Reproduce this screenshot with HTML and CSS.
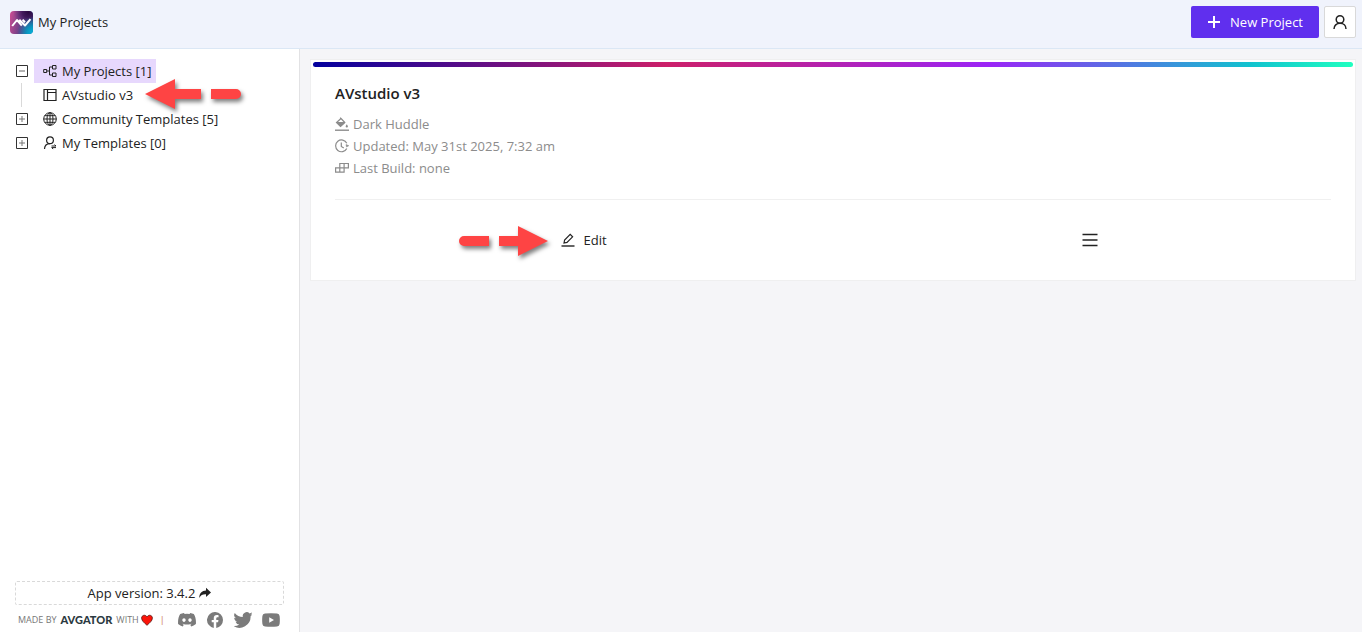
FILE: index.html
```html
<!DOCTYPE html>
<html lang="en">
<head>
<meta charset="utf-8">
<title>My Projects</title>
<meta name="viewport" content="width=device-width, initial-scale=1">
<link rel="stylesheet" href="styles.css">
</head>
<body>
<div class="app">
  <header class="header">
    <a class="brand" href="#">
      <svg class="logo" viewBox="0 0 23 23" aria-hidden="true">
        <defs>
          <linearGradient id="lg-base" x1="0" y1="0.3" x2="1" y2="0.5">
            <stop offset="0" stop-color="#c44c92"/><stop offset="0.5" stop-color="#6b3f86"/><stop offset="1" stop-color="#1b6aa0"/>
          </linearGradient>
          <radialGradient id="lg-dark" cx="0.8" cy="0.05" r="0.65">
            <stop offset="0" stop-color="#2a0840"/><stop offset="0.4" stop-color="#3d1456" stop-opacity="0.9"/><stop offset="1" stop-color="#5a2a78" stop-opacity="0"/>
          </radialGradient>
          <radialGradient id="lg-cyan" cx="1" cy="0.95" r="0.7">
            <stop offset="0" stop-color="#06b4dc"/><stop offset="0.4" stop-color="#0b93bd"/><stop offset="1" stop-color="#2c6aa0" stop-opacity="0"/>
          </radialGradient>
        </defs>
        <rect width="23" height="23" rx="4" fill="url(#lg-base)"/>
        <rect width="23" height="23" rx="4" fill="url(#lg-dark)"/>
        <rect width="23" height="23" rx="4" fill="url(#lg-cyan)"/>
        <path d="M2.200 15 7 9l4.800 5.600M9.300 8.800l5.700 5.700 5.500-6.300M12.600 8.600l2.400 2.600" fill="none" stroke="#fff" stroke-width="2" stroke-linejoin="round"/>
      </svg>
      <span>My Projects</span>
    </a>
    <div class="header-actions">
      <button class="btn-primary" type="button">
        <svg class="icon-14" viewBox="0 0 14 14" aria-hidden="true"><path d="M7 1v12M1 7h12" stroke="currentColor" stroke-width="2"/></svg>
        <span>New Project</span>
      </button>
      <button class="btn-user" type="button" aria-label="Account">
        <svg class="icon-16" viewBox="0 0 16 16" fill="none" stroke="currentColor" stroke-width="1.500"><circle cx="8" cy="5.500" r="3.800"/><path d="M2 15c0-3.300 2.500-5.700 6-5.700s6 2.400 6 5.700"/></svg>
      </button>
    </div>
  </header>

  <div class="body">
    <aside class="sidebar">
      <ul class="tree">
        <li>
          <div class="row">
            <button class="switcher" type="button" aria-label="Collapse My Projects"><svg class="icon-12" viewBox="0 0 12 12" fill="none"><path d="M.5.500h11v11H.5z" stroke="#333"/><path d="M3 6h6" stroke="#666"/></svg></button>
            <button class="node selected" type="button">
              <svg class="icon-14" viewBox="0 0 14 14" fill="none" stroke="currentColor"><path d="M.7 5.500h3v3h-3zM9.500 1.500h3.500V5H9.500zM9.500 9h3.500v3.500H9.500zM3.700 7h2.800M9.500 3h-3v8h3"/></svg>
              <span>My Projects [1]</span>
            </button>
          </div>
          <ul class="subtree">
            <li class="row">
              <button class="node" type="button">
                <svg class="icon-14" viewBox="0 0 14 14" fill="none" stroke="currentColor"><path d="M1 1.500h12v11H1zM4.500 1.500v11M4.500 4.500H13" stroke-width="1.200"/></svg>
                <span>AVstudio v3</span>
              </button>
            </li>
          </ul>
        </li>
        <li class="row">
          <button class="switcher" type="button" aria-label="Expand Community Templates"><svg class="icon-12" viewBox="0 0 12 12" fill="none"><path d="M.5.500h11v11H.5z" stroke="#333"/><path d="M3 6h6M6 3v6" stroke="#777"/></svg></button>
          <button class="node" type="button">
            <svg class="icon-14" viewBox="0 0 14 14" fill="none" stroke="currentColor"><circle cx="7" cy="7" r="6.300"/><ellipse cx="7" cy="7" rx="3" ry="6.300"/><path d="M.7 7h12.600M7 .7v12.600M1.700 3.700h10.600M1.700 10.300h10.600"/></svg>
            <span>Community Templates [5]</span>
          </button>
        </li>
        <li class="row">
          <button class="switcher" type="button" aria-label="Expand My Templates"><svg class="icon-12" viewBox="0 0 12 12" fill="none"><path d="M.5.500h11v11H.5z" stroke="#333"/><path d="M3 6h6M6 3v6" stroke="#777"/></svg></button>
          <button class="node" type="button">
            <svg class="icon-14" viewBox="0 0 14 14" fill="none" stroke="currentColor" stroke-width="1.200"><circle cx="7" cy="4.200" r="3.400"/><path d="M1.500 13c.1-3 2.200-5.300 5.500-5.400"/><path d="M8.500 10H13l-1.500-1.400M13 11.600H8.700l1.500 1.500" stroke-width="1"/></svg>
            <span>My Templates [0]</span>
          </button>
        </li>
      </ul>

      <footer class="footer">
        <button class="version" type="button">
          <span>App version: 3.4.2</span>
          <svg class="icon-12" viewBox="0 0 12 12" aria-hidden="true"><path d="M7 .8 12 5.400 7 10V7.300C4 7.100 1.800 8 .3 11 .2 6.500 3 3.700 7 3.600z" fill="currentColor"/></svg>
        </button>
        <div class="credits">
          <span>MADE BY</span>
          <a class="maker" href="#">AVGATOR</a>
          <span class="with">WITH<svg class="icon-12" viewBox="0 0 12 12" role="img" aria-label="love"><path d="M6 11.300C3.500 9 .6 6.800.6 4.100.6 1 4.500.2 6 2.900 7.500.2 11.400 1 11.400 4.100c0 2.700-2.900 4.900-5.400 7.200z" fill="#fb1409" stroke="#5a1410" stroke-width=".8"/></svg></span>
          <span class="bar">|</span>
          <nav class="social">
            <a href="#" aria-label="Discord"><svg viewBox="0 0 18 16"><path fill="currentColor" fill-rule="evenodd" d="M6.200 1 5.900.9C4.500 1.100 3.200 1.500 2.200 2 .5 4.800-.2 8 .1 12.100c1.500 1.200 3 1.900 4.700 2.300l1-1.700-1.300-.7.4-.3c2.700 1.200 5.500 1.200 8.200 0l.4.300-1.300.7 1 1.700c1.700-.4 3.200-1.100 4.700-2.300.3-4.100-.4-7.300-2.100-10.100-1-.5-2.300-.9-3.700-1.100l-.5 1.200a13 13 0 0 0-5.200 0zM6 6.200c1 0 1.700.8 1.700 1.900S7 10 6 10s-1.700-.8-1.700-1.900S5 6.200 6 6.200m6 0c1 0 1.700.8 1.700 1.900S13 10 12 10s-1.700-.8-1.700-1.900S11 6.200 12 6.200"/></svg></a>
            <a href="#" aria-label="Facebook"><svg viewBox="0 0 16 16"><path fill="currentColor" d="M16 8a8 8 0 1 0-9.250 7.900V10.300H4.700V8h2.050V6.200c0-2 1.200-3.100 3-3.100.9 0 1.800.15 1.800.15v2h-1c-1 0-1.300.6-1.300 1.250V8h2.200l-.35 2.300H9.250v5.600A8 8 0 0 0 16 8"/></svg></a>
            <a href="#" aria-label="Twitter"><svg viewBox="1 2 22 20"><path fill="currentColor" d="M24 4.600a10 10 0 0 1-2.800.8 5 5 0 0 0 2.100-2.700c-1 .6-2 1-3.100 1.200a4.900 4.900 0 0 0-8.400 4.500A14 14 0 0 1 1.700 3.200a4.900 4.900 0 0 0 1.500 6.500A5 5 0 0 1 1 9.100c0 2.300 1.600 4.400 3.900 4.900a5 5 0 0 1-2.200.1 4.900 4.900 0 0 0 4.600 3.400A10 10 0 0 1 0 19.500 14 14 0 0 0 21.500 7.100 10 10 0 0 0 24 4.600"/></svg></a>
            <a href="#" aria-label="YouTube"><svg viewBox="0 0 18 16"><path fill="currentColor" fill-rule="evenodd" d="M3 1.500Q9 .8 15 1.500q2.400.3 2.600 2.500.5 4 0 8-.2 2.200-2.600 2.500-6 .7-12 0Q.6 14.200.4 12-.1 8 .4 4 .6 1.800 3 1.500m4.200 3.700v5.600L12 8z"/></svg></a>
          </nav>
        </div>
      </footer>
    </aside>

    <main class="main">
      <article class="card">
        <div class="stripe"></div>
        <div class="card-body">
          <h2 class="title">AVstudio v3</h2>
          <ul class="meta">
            <li><svg class="icon-14" viewBox="0 0 14 14" fill="none" stroke="currentColor"><path d="M0 13.200h14" stroke-width="1.400"/><path d="M5.200.7 6.500 2l3.300 3.500-4.300 4-4-4L6 1.500" stroke-width="1.200"/><path d="M1.800 5.500h8l-4.300 4z" fill="currentColor"/><path d="M11.800 7.300c-1.700 2.300-1.400 3.300 0 3.300s1.700-1 0-3.300" fill="currentColor" stroke="none"/></svg><span>Dark Huddle</span></li>
            <li><svg class="icon-14" viewBox="0 0 14 14" fill="none" stroke="currentColor" stroke-width="1.200"><path d="M11.800 4.200a5.900 5.900 0 1 0 0 5.300M6.300 3.500v4l2.500 1.500"/><path d="m11 5.500 2.800 1.200L11.500 8z" fill="currentColor" stroke-width=".5"/></svg><span>Updated: May 31st 2025, 7:32 am</span></li>
            <li><svg class="icon-14" viewBox="0 0 14 14" fill="none" stroke="currentColor" stroke-width="1.200"><path d="M4.800 2.500h8.600v4.300H4.800zM.6 6.800h8.500v4.400H.6zM4.800 2.500v8.700M9.100 2.500v8.700"/></svg><span>Last Build: none</span></li>
          </ul>
          <div class="actions">
            <div class="action">
              <button class="action-btn" type="button">
                <svg class="icon-14" viewBox="0 0 14 14" fill="none" stroke="currentColor"><path d="M.5 13h13" stroke-width="1.400"/><path d="m3 10 .6-3L9.200 1.400l2.400 2.400L6 9.400z" stroke-width="1.200"/></svg>
                <span>Edit</span>
              </button>
            </div>
            <div class="action action-menu">
              <button class="action-btn" type="button" aria-label="More actions">
                <svg class="icon-16" viewBox="0 0 16 16"><path d="M.5 2.500h15M.5 8h15M.5 13.500h15" stroke="currentColor" stroke-width="1.500"/></svg>
              </button>
            </div>
          </div>
        </div>
      </article>
    </main>
  </div>

  <svg class="pointer pointer-left" viewBox="0 0 96 30" aria-hidden="true"><path fill="#fe4444" d="M0 15 30 0v10h26v10H30v10zM66 10h25a5 5 0 0 1 0 10H66z"/></svg>
  <svg class="pointer pointer-right" viewBox="0 0 89 30" aria-hidden="true"><path fill="#fe4444" d="M89 15 59 0v10H40v10h19v10zM30 10H5a5 5 0 0 0 0 10h25z"/></svg>
</div>
</body>
</html>
```
FILE: styles.css
```css
* { box-sizing: border-box; }

body {
  margin: 0;
  font-family: "Segoe UI", "Open Sans", "Noto Sans", sans-serif;
  font-size: 13px;
  line-height: 22px;
  color: #222;
}

button {
  margin: 0;
  padding: 0;
  border: 0;
  background: none;
  font: inherit;
  color: inherit;
  cursor: pointer;
}

a { color: inherit; text-decoration: none; }
ul { margin: 0; padding: 0; list-style: none; }
svg { display: block; flex: none; }

.icon-12 { width: 12px; height: 12px; }
.icon-14 { width: 14px; height: 14px; }
.icon-16 { width: 16px; height: 16px; }

.app {
  position: relative;
  display: flex;
  flex-direction: column;
  min-height: 100vh;
}

.header {
  display: flex;
  align-items: center;
  justify-content: space-between;
  padding: 6px 6px 10px 10px;
  background: #f0f3fc;
  border-bottom: 1px solid #dbe7f5;
}

.brand { display: flex; align-items: center; gap: 5px; }
.logo { width: 23px; height: 23px; }
.header-actions { display: flex; gap: 5px; }

.btn-primary {
  display: flex;
  align-items: center;
  gap: 9px;
  height: 32px;
  padding: 0 16px;
  border-radius: 2px;
  background: #602fee;
  color: #fff;
}

.btn-user {
  display: grid;
  place-items: center;
  width: 32px;
  height: 32px;
  border: 1px solid #d9d9d9;
  border-radius: 2px;
  background: #fff;
}

.body { display: flex; flex: 1; }

.sidebar {
  display: flex;
  flex-direction: column;
  justify-content: space-between;
  width: 300px;
  flex: none;
  border-right: 1px solid #e2e2e4;
  background: #fff;
}

.tree { padding: 10px 16px; }
.row { display: flex; align-items: center; gap: 6px; height: 24px; }
.subtree { margin-left: 5px; padding-left: 12px; border-left: 1px solid #d9d9d9; }
.switcher { width: 12px; height: 12px; }
.node {
  display: flex;
  align-items: center;
  gap: 5px;
  height: 24px;
  padding: 0 4px 0 9px;
}
.selected { background: #e7d8fd; }

.footer { padding: 0 15px; }
.version {
  display: flex;
  align-items: center;
  justify-content: center;
  gap: 4px;
  width: 100%;
  height: 24px;
  border: 1px dashed #d9d9d9;
  border-radius: 2px;
}
.credits {
  display: flex;
  align-items: center;
  gap: 4px;
  height: 24px;
  margin-top: 3px;
  padding-left: 3px;
  font-size: 9px;
  color: #777;
}
.maker {
  font-family: Lato, sans-serif;
  font-size: 11px;
  font-weight: 900;
  color: #2b3940;
}
.with { display: flex; align-items: center; gap: 2px; }
.bar { padding-left: 3px; font-weight: 600; color: #d6957a; }
.social { display: flex; gap: 10px; margin-left: 9px; color: #7b7b7b; }
.social svg { width: 18px; height: 16px; }

.main { flex: 1; padding: 10px 6px 10px 10px; background: #f5f5f8; }

.card {
  padding: 2px;
  border: 1px solid #efeff0;
  background: #fff;
}
.stripe {
  height: 5px;
  border-radius: 3px;
  background: linear-gradient(90deg, #03009e 0%, #cc1f69 34%, #9b24f7 65%, #11c2cf 90%, #20ffc0 100%);
}
.card-body { padding: 15px 22px 22px; }
.title { margin: 0 0 9px; font-size: 15px; font-weight: 600; line-height: 22px; }
.meta { color: #8c8c8c; }
.meta li { display: flex; align-items: center; gap: 4px; }

.actions {
  display: grid;
  grid-template-columns: 1fr 1fr;
  margin-top: 20px;
  padding-top: 24px;
  border-top: 1px solid #f0f0f0;
}
.action { display: flex; justify-content: center; }
.action-menu { padding-left: 16px; }
.action-btn { display: flex; align-items: center; gap: 8px; height: 32px; }

.pointer { position: absolute; filter: drop-shadow(2px 3px 2px rgba(0, 0, 0, 0.5)); }
.pointer-left { left: 145px; top: 79px; width: 96px; height: 30px; }
.pointer-right { left: 459px; top: 226px; width: 89px; height: 30px; }
```
